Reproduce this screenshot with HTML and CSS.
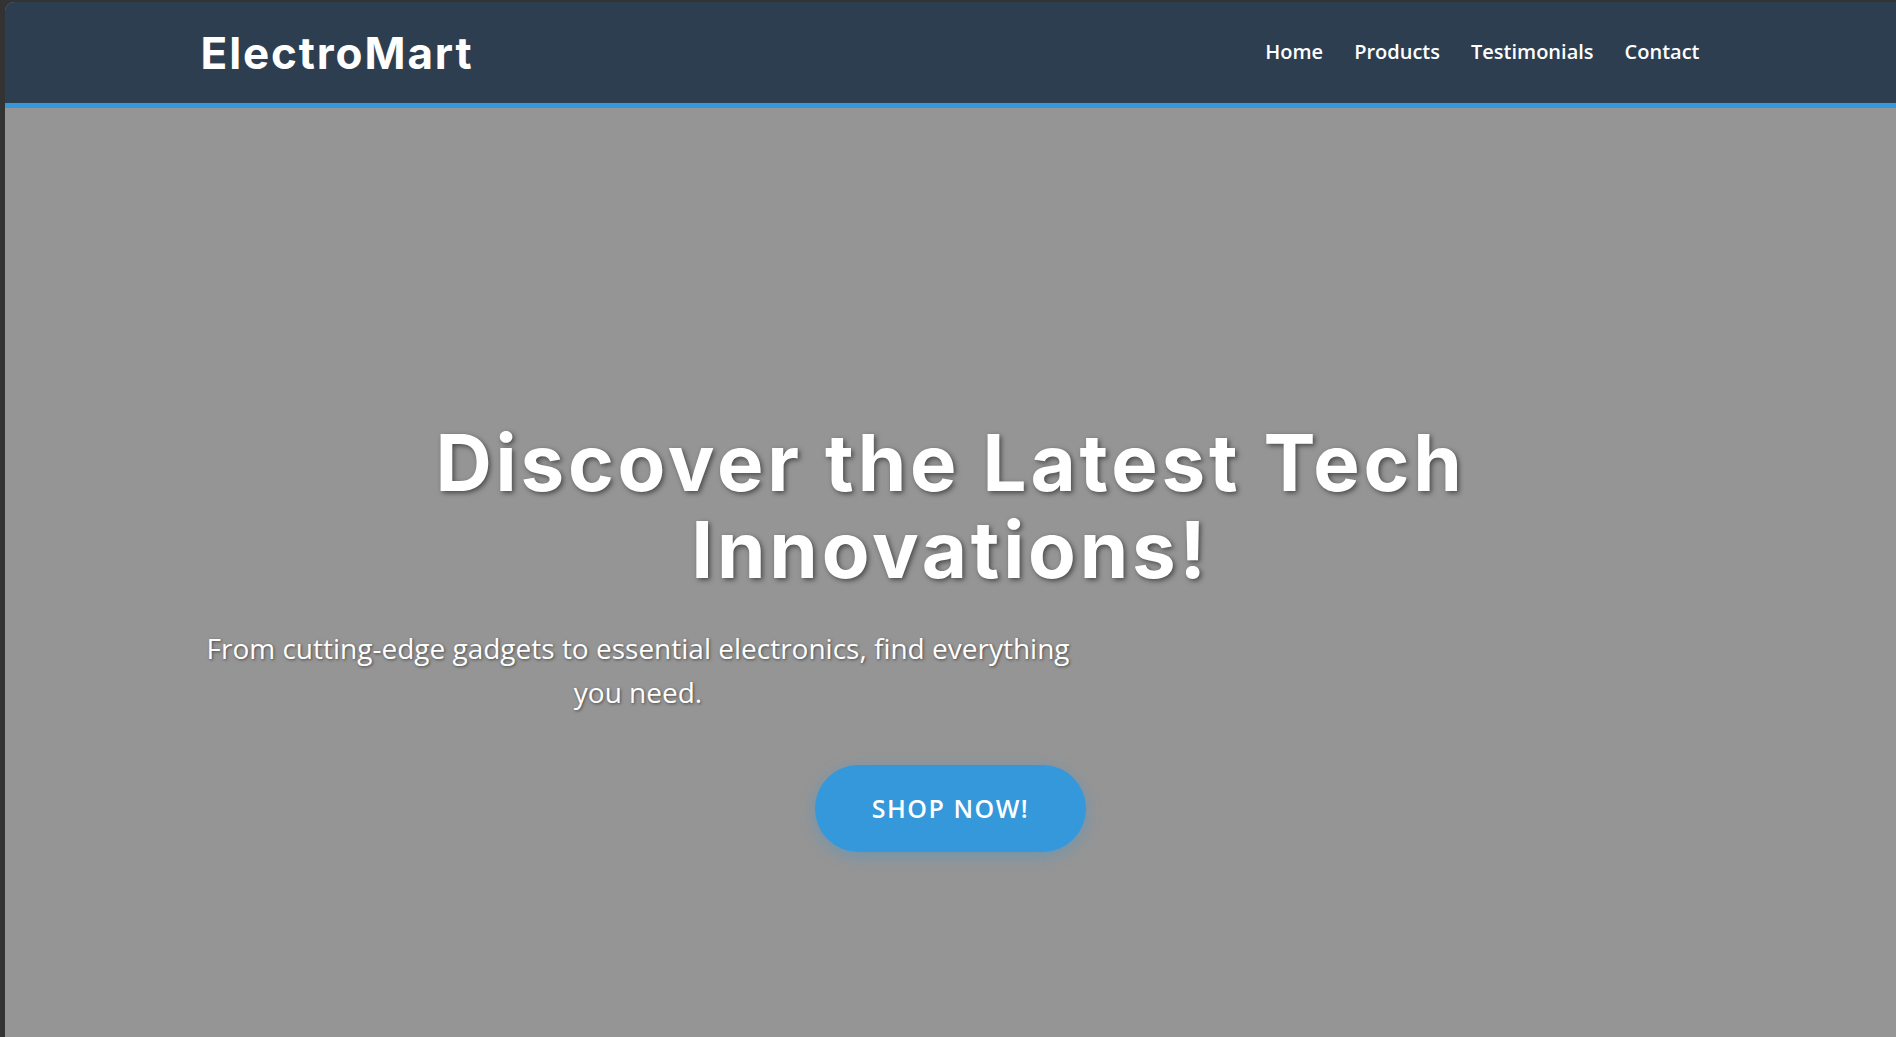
FILE: index.html
```html
<!DOCTYPE html>
<html lang="en">
<head>
<meta charset="utf-8">
<title>ElectroMart</title>
<link rel="stylesheet" href="styles.css">
</head>
<body>
<div class="frame">
  <header class="site-header">
    <div class="container header-inner">
      <a class="logo" href="#">ElectroMart</a>
      <nav class="nav">
        <a href="#">Home</a>
        <a href="#">Products</a>
        <a href="#">Testimonials</a>
        <a href="#">Contact</a>
      </nav>
    </div>
  </header>
  <section class="hero">
    <div class="container hero-inner">
      <h1 class="hero-title">Discover the Latest Tech Innovations!</h1>
      <p class="hero-sub">From cutting-edge gadgets to essential electronics, find everything you need.</p>
      <a class="btn" href="#">SHOP NOW!</a>
    </div>
  </section>
</div>
</body>
</html>
```

FILE: styles.css
```css
html, body {
  margin: 0;
  padding: 0;
  height: 100%;
}
body {
  background: #333333;
  overflow: hidden;
}
.frame {
  margin: 2px 0 0 5px;
  height: calc(100% - 2px);
  border-top-left-radius: 9px;
  overflow: hidden;
  display: flex;
  flex-direction: column;
  background: #959595;
}
.container {
  width: 1500px;
  margin: 0 auto;
}
.site-header {
  background: #2c3e50;
  border-bottom: 5px solid #3498db;
  height: 101px;
  flex: none;
}
.header-inner {
  height: 100%;
  display: flex;
  align-items: center;
  justify-content: space-between;
}
.logo {
  font-family: Inter, "Liberation Sans", sans-serif;
  font-weight: 700;
  font-size: 44px;
  color: #ffffff;
  text-decoration: none;
  letter-spacing: 1.9px;
  margin-top: 1px;
}
.nav {
  display: flex;
  gap: 31px;
  margin-top: -2px;
  margin-right: 1px;
}
.nav a {
  font-family: "Open Sans", "Liberation Sans", sans-serif;
  font-weight: 600;
  font-size: 20px;
  color: #ffffff;
  text-decoration: none;
}
.hero {
  flex: 1;
  background: #959595;
}
.hero-inner {
  padding-top: 311px;
  display: flex;
  flex-direction: column;
  align-items: center;
}
.hero-title {
  margin: 0;
  font-family: Inter, "Liberation Sans", sans-serif;
  font-weight: 700;
  font-size: 78px;
  line-height: 87px;
  letter-spacing: 3.8px;
  color: #ffffff;
  text-align: center;
  width: 1150px;
  text-shadow: 2px 2px 5px rgba(0, 0, 0, 0.5);
}
.hero-sub {
  align-self: flex-start;
  max-width: 875px;
  margin: 33px 0 0 0;
  font-family: "Open Sans", "Liberation Sans", sans-serif;
  font-size: 28px;
  line-height: 44px;
  color: #ffffff;
  text-align: center;
  text-shadow: 1px 1px 3px rgba(0, 0, 0, 0.5);
}
.btn {
  margin-top: 51px;
  display: inline-block;
  background: #3498db;
  color: #ffffff;
  text-decoration: none;
  font-family: "Open Sans", "Liberation Sans", sans-serif;
  font-weight: 600;
  font-size: 25px;
  letter-spacing: 1.5px;
  line-height: 37px;
  padding: 25px 57px;
  border-radius: 50px;
  box-shadow: 0 4px 15px rgba(52, 152, 219, 0.4);
}
```
